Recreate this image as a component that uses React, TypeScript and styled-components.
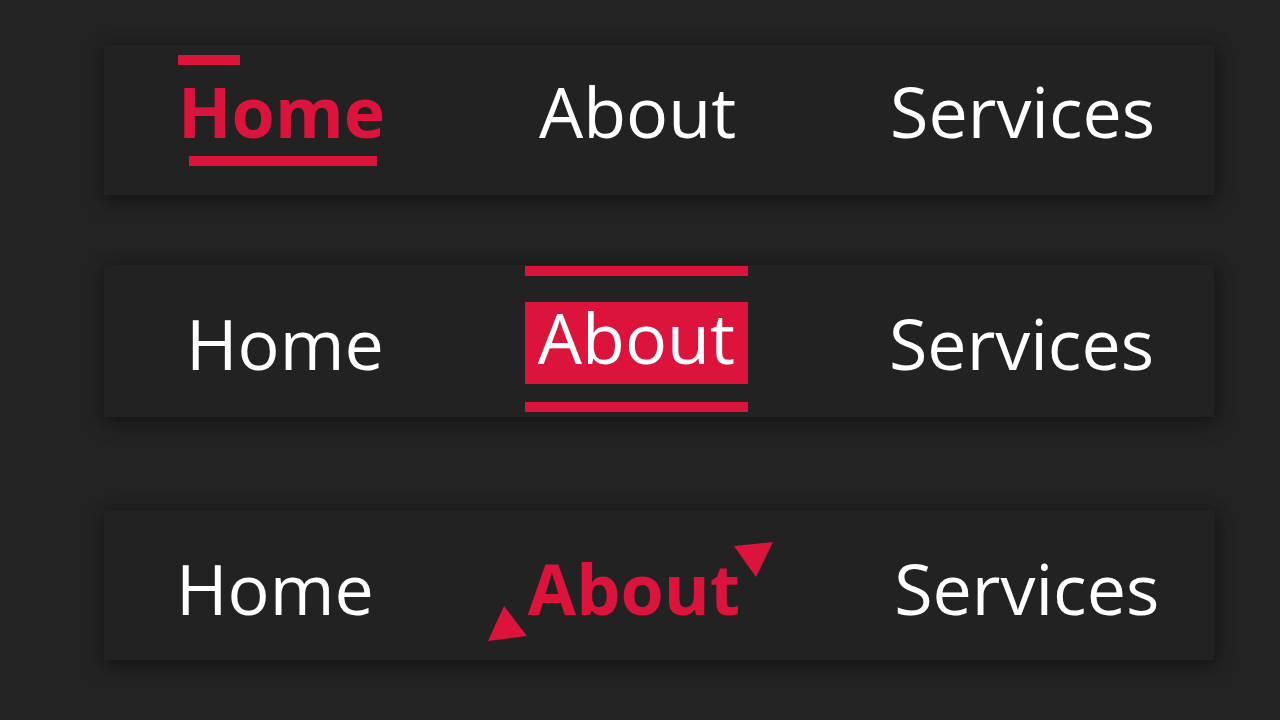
import styled, { createGlobalStyle, css } from 'styled-components';

const accent = '#dc143c';

const GlobalStyle = createGlobalStyle`
    html, body {
        margin: 0;
        padding: 0;
        background: #232323;
    }
    body {
        font-family: "Open Sans", "Noto Sans", sans-serif;
        color: #fff;
        width: 1280px;
        height: 720px;
        overflow: hidden;
    }
`;

// three stacked demo bars; the last one sits a little lower
const Page = styled.div`
    display: grid;
    grid-template-columns: 1110px;
    grid-template-rows: 150px 152px 173px;
    row-gap: 70px;
    padding: 45px 0 0 104px;
`;

const Bar = styled.nav<{ $pad: number; $offset?: number; $last?: boolean }>`
    display: flex;
    align-items: center;
    gap: 154px;
    box-sizing: border-box;
    height: ${p => (p.$last ? '150px' : 'auto')};
    align-self: ${p => (p.$last ? 'end' : 'stretch')};
    padding-left: ${p => p.$pad}px;
    padding-top: ${p => Math.max(p.$offset ?? 0, 0)}px;
    padding-bottom: ${p => Math.max(-(p.$offset ?? 0), 0)}px;
    background: #222222;
    box-shadow: 0 6px 18px rgba(0, 0, 0, 0.35), 4px 0 14px rgba(0, 0, 0, 0.2);
`;

type Variant = 'plain' | 'underline' | 'boxed' | 'corners';

const NavLink = styled.a<{ $variant: Variant }>`
    position: relative;
    display: block;
    font-size: 70px;
    line-height: 1;
    color: #fff;
    text-decoration: none;
    white-space: nowrap;

    ${p => p.$variant === 'underline' && css`
        color: ${accent};
        font-weight: 700;
        &::before, &::after {
            content: '';
            position: absolute;
            height: 10px;
            background: ${accent};
        }
        &::before {
            left: 0;
            top: -21px;
            width: 62px;
        }
        &::after {
            left: 11px;
            bottom: -20px;
            width: 188px;
        }
    `}

    ${p => p.$variant === 'boxed' && css`
        background: ${accent};
        padding: 0 13px 12px;
        margin: 0 -13px;
        &::before, &::after {
            content: '';
            position: absolute;
            left: 0;
            right: 0;
            height: 10px;
            background: ${accent};
        }
        &::before { top: -36px; }
        &::after { bottom: -28px; }
    `}

    ${p => p.$variant === 'corners' && css`
        color: ${accent};
        font-weight: 700;
    `}
`;

const Corners = styled.svg`
    position: absolute;
    left: -45px;
    top: -14px;
    width: 295px;
    height: 110px;
    fill: ${accent};
    pointer-events: none;
`;

const CornerMarks = () => (
    <Corners viewBox="0 0 295 110">
        <polygon points="5,102 21,67 44,97" />
        <polygon points="251,7 290,3 273,38" />
    </Corners>
);

export default function App() {
    return (
        <>
            <GlobalStyle />
            <Page>
                <Bar $pad={74} $offset={-18}>
                    <NavLink $variant="underline">Home</NavLink>
                    <NavLink $variant="plain">About</NavLink>
                    <NavLink $variant="plain">Services</NavLink>
                </Bar>
                <Bar $pad={82} $offset={4}>
                    <NavLink $variant="plain">Home</NavLink>
                    <NavLink $variant="boxed">About</NavLink>
                    <NavLink $variant="plain">Services</NavLink>
                </Bar>
                <Bar $pad={72} $offset={6} $last>
                    <NavLink $variant="plain">Home</NavLink>
                    <NavLink $variant="corners">
                        About
                        <CornerMarks />
                    </NavLink>
                    <NavLink $variant="plain">Services</NavLink>
                </Bar>
            </Page>
        </>
    );
}
